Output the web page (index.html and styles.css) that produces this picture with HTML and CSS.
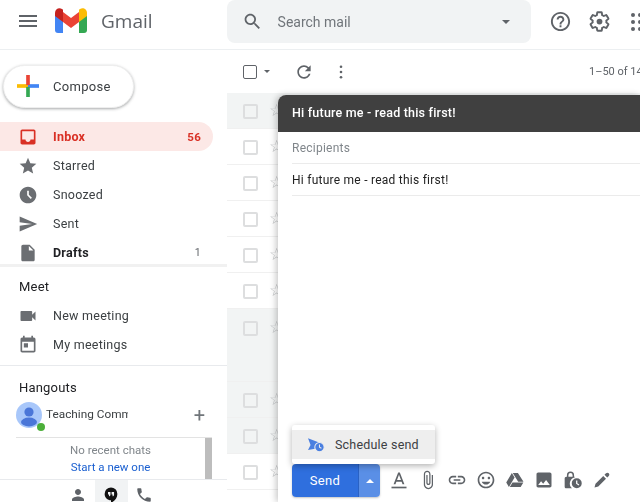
FILE: index.html
```html
<!DOCTYPE html>
<html lang="en">
<head>
    <meta charset="UTF-8">
    <title>Gmail</title>
    <meta name="viewport" content="width=device-width, initial-scale=1.0">
    <link rel="stylesheet" href="styles.css">
</head>
<body>
<div class="app">
    <header class="topbar">
        <svg class="menu-icon" viewBox="0 0 24 24"><path d="M3 18h18v-2H3v2zm0-5h18v-2H3v2zm0-7v2h18V6H3z"/></svg>
        <svg class="gmail-logo" viewBox="0 0 32 25">
            <path fill="#4285f4" d="M0 5h8v20H3a3 3 0 0 1-3-3z"/>
            <path fill="#34a853" d="M24 5h8v17a3 3 0 0 1-3 3h-5z"/>
            <path fill="#ea4335" d="M8 4l8 6 8-6v10l-8 6-8-6z"/>
            <path fill="#c5221f" d="M0 5C0 1 4-1 7 1l1 .8V14L0 8z"/>
            <path fill="#fbbc04" d="M32 5c0-4-4-6-7-4l-1 .8V14l8-6z"/>
        </svg>
        <span class="brand">Gmail</span>
        <div class="search">
            <svg class="search-icon" viewBox="0 0 24 24"><path d="M15.5 14h-.79l-.28-.27C15.41 12.59 16 11.11 16 9.5 16 5.91 13.09 3 9.5 3S3 5.91 3 9.5 5.91 16 9.5 16c1.61 0 3.09-.59 4.23-1.57l.27.28v.79l5 4.99L20.49 19l-4.99-5zm-6 0C7.01 14 5 11.99 5 9.5S7.01 5 9.5 5 14 7.01 14 9.5 11.99 14 9.5 14z"/></svg>
            <span class="search-text">Search mail</span>
            <span class="caret"></span>
        </div>
        <svg class="help-icon" viewBox="0 0 24 24"><path d="M11 18h2v-2h-2v2zm1-16C6.48 2 2 6.48 2 12s4.48 10 10 10 10-4.48 10-10S17.52 2 12 2zm0 18c-4.41 0-8-3.59-8-8s3.59-8 8-8 8 3.59 8 8-3.59 8-8 8zm0-14c-2.21 0-4 1.79-4 4h2c0-1.1.9-2 2-2s2 .9 2 2c0 2-3 1.75-3 5h2c0-2.25 3-2.5 3-5 0-2.21-1.79-4-4-4z"/></svg>
        <svg class="gear-icon" viewBox="0 0 24 24"><path fill="none" stroke="#5f6368" stroke-width="2" d="M19.14 12.94c.04-.3.06-.61.06-.94 0-.32-.02-.64-.07-.94l2.03-1.58c.18-.14.23-.41.12-.61l-1.92-3.32c-.12-.22-.37-.29-.59-.22l-2.39.96c-.5-.38-1.03-.7-1.62-.94l-.36-2.54c-.04-.24-.24-.41-.48-.41h-3.84c-.24 0-.43.17-.47.41l-.36 2.54c-.59.24-1.13.57-1.62.94l-2.39-.96c-.22-.08-.47 0-.59.22L2.74 8.87c-.12.21-.08.47.12.61l2.03 1.58c-.05.3-.09.63-.09.94s.02.64.07.94l-2.03 1.58c-.18.14-.23.41-.12.61l1.92 3.32c.12.22.37.29.59.22l2.39-.96c.5.38 1.03.7 1.62.94l.36 2.54c.05.24.24.41.48.41h3.84c.24 0 .44-.17.47-.41l.36-2.54c.59-.24 1.13-.56 1.62-.94l2.39.96c.22.08.47 0 .59-.22l1.92-3.32c.12-.22.07-.47-.12-.61l-2.01-1.58z"/><circle cx="12" cy="12" r="3"/></svg>
        <svg class="grid-icon" viewBox="0 0 18 18"><circle cx="2" cy="2" r="2"/><circle cx="9" cy="2" r="2"/><circle cx="2" cy="9" r="2"/><circle cx="9" cy="9" r="2"/><circle cx="2" cy="16" r="2"/><circle cx="9" cy="16" r="2"/></svg>
    </header>

    <div class="content">
        <aside class="sidebar">
            <button class="compose-btn">
                <svg class="plus-icon" viewBox="0 0 24 24">
                    <rect x="0" y="10" width="12" height="4" fill="#fbbc04"/>
                    <rect x="12" y="10" width="12" height="4" fill="#4285f4"/>
                    <rect x="10" y="0" width="4" height="11" fill="#ea4335"/>
                    <rect x="10" y="13" width="4" height="11" fill="#34a853"/>
                </svg>
                Compose
            </button>

            <nav class="nav nav-mail">
                <a class="nav-item active">
                    <svg viewBox="0 0 24 24"><path d="M19 3H5c-1.1 0-2 .9-2 2v14c0 1.1.9 2 2 2h14c1.1 0 2-.9 2-2V5c0-1.1-.9-2-2-2zm0 12h-4c0 1.66-1.35 3-3 3s-3-1.34-3-3H5V5h14v10z"/></svg>
                    <span class="nav-label">Inbox</span><span class="nav-count">56</span>
                </a>
                <a class="nav-item">
                    <svg viewBox="0 0 24 24"><path d="M12 17.27L18.18 21l-1.64-7.03L22 9.24l-7.19-.61L12 2 9.19 8.63 2 9.24l5.46 4.73L5.82 21z"/></svg>
                    <span class="nav-label">Starred</span>
                </a>
                <a class="nav-item">
                    <svg viewBox="0 0 24 24"><path d="M11.99 2C6.47 2 2 6.48 2 12s4.47 10 9.99 10C17.52 22 22 17.52 22 12S17.52 2 11.99 2zm3.3 14.71L11 12.41V7h2v4.59l3.71 3.71-1.42 1.41z"/></svg>
                    <span class="nav-label">Snoozed</span>
                </a>
                <a class="nav-item">
                    <svg viewBox="0 0 24 24"><path d="M2.01 21L23 12 2.01 3 2 10l15 2-15 2z"/></svg>
                    <span class="nav-label">Sent</span>
                </a>
                <a class="nav-item bold">
                    <svg viewBox="0 0 24 24"><path d="M6 2c-1.1 0-1.99.9-1.99 2L4 20c0 1.1.89 2 1.99 2H18c1.1 0 2-.9 2-2V8l-6-6H6zm7 7V3.5L18.5 9H13z"/></svg>
                    <span class="nav-label">Drafts</span><span class="nav-count small">1</span>
                </a>
            </nav>

            <section class="meet">
                <h3 class="side-title">Meet</h3>
                <a class="nav-item">
                    <svg viewBox="0 0 24 24"><path d="M17 10.5V7c0-.55-.45-1-1-1H4c-.55 0-1 .45-1 1v10c0 .55.45 1 1 1h12c.55 0 1-.45 1-1v-3.5l4 4v-11l-4 4z"/></svg>
                    <span class="nav-label">New meeting</span>
                </a>
                <a class="nav-item">
                    <svg viewBox="0 0 24 24"><path d="M19 3h-1V1h-2v2H8V1H6v2H5c-1.11 0-1.99.9-1.99 2L3 19c0 1.1.89 2 2 2h14c1.1 0 2-.9 2-2V5c0-1.1-.9-2-2-2zm0 16H5V8h14v11zM7 10h5v5H7z"/></svg>
                    <span class="nav-label">My meetings</span>
                </a>
            </section>

            <section class="hangouts">
                <h3 class="side-title">Hangouts</h3>
                <div class="hangout-user">
                    <div class="avatar">
                        <svg viewBox="0 0 26 26"><circle cx="13" cy="13" r="13" fill="#a8c7fa"/><circle cx="13" cy="10" r="4.6" fill="#4a76d8"/><ellipse cx="13" cy="20" rx="8" ry="4.4" fill="#4a76d8"/></svg>
                        <span class="online-dot"></span>
                    </div>
                    <span class="hangout-name">Teaching Comm</span>
                    <span class="hangout-plus">+</span>
                </div>
                <div class="chat-box">
                    <div class="chat-text">
                        <span class="chat-empty">No recent chats</span>
                        <a class="chat-link">Start a new one</a>
                    </div>
                    <div class="chat-scroll"></div>
                </div>
                <div class="chat-tabs">
                    <span class="chat-tab"><svg viewBox="0 0 24 24"><path d="M12 12c2.21 0 4-1.79 4-4s-1.79-4-4-4-4 1.79-4 4 1.79 4 4 4zm0 2c-2.67 0-8 1.34-8 4v2h16v-2c0-2.66-5.33-4-8-4z"/></svg></span>
                    <span class="chat-tab selected"><svg viewBox="0 0 24 24"><path fill="#111" fill-rule="evenodd" d="M12 2a8.500 8.500 0 0 0-8.500 8.500c0 4.700 3.800 8.500 8.500 8.500v3.500c4.500-2.200 8.500-6.700 8.500-12A8.500 8.500 0 0 0 12 2zM8 8h3.300v3.300c0 1.300-.8 2.200-2 2.500v-2.500H8zm4.800 0h3.300v3.300c0 1.300-.8 2.200-2 2.500v-2.500h-1.300z"/></svg></span>
                    <span class="chat-tab"><svg viewBox="0 0 24 24"><path d="M6.620 10.790c1.440 2.830 3.760 5.140 6.590 6.590l2.200-2.200c.27-.27.67-.36 1.020-.24 1.120.37 2.330.57 3.570.57.55 0 1 .45 1 1V20c0 .55-.45 1-1 1-9.390 0-17-7.610-17-17 0-.55.45-1 1-1h3.500c.55 0 1 .45 1 1 0 1.250.2 2.450.57 3.570.11.35.03.74-.25 1.020l-2.200 2.200z"/></svg></span>
                </div>
            </section>
        </aside>

        <main class="mail">
            <div class="mail-toolbar">
                <span class="check dark"></span>
                <span class="caret tiny"></span>
                <svg class="refresh-icon" viewBox="0 0 24 24"><path d="M17.650 6.350C16.200 4.900 14.210 4 12 4c-4.420 0-7.990 3.580-7.990 8s3.570 8 7.990 8c3.730 0 6.840-2.550 7.730-6h-2.080c-.82 2.330-3.040 4-5.650 4-3.310 0-6-2.690-6-6s2.690-6 6-6c1.660 0 3.140.69 4.220 1.780L13 11h7V4l-2.350 2.350z"/></svg>
                <svg class="more-icon" viewBox="0 0 4 16"><circle cx="2" cy="2" r="1.500"/><circle cx="2" cy="8" r="1.500"/><circle cx="2" cy="14" r="1.500"/></svg>
                <span class="paging">1–50 of 14</span>
            </div>
            <div class="row shaded"><span class="check"></span><span class="star">☆</span></div>
            <div class="row"><span class="check"></span><span class="star">☆</span></div>
            <div class="row"><span class="check"></span><span class="star">☆</span></div>
            <div class="row"><span class="check"></span><span class="star">☆</span></div>
            <div class="row"><span class="check"></span><span class="star">☆</span></div>
            <div class="row"><span class="check"></span><span class="star">☆</span></div>
            <div class="row shaded tall"><span class="check"></span><span class="star">☆</span></div>
            <div class="row shaded"><span class="check"></span><span class="star">☆</span></div>
            <div class="row shaded"><span class="check"></span><span class="star">☆</span></div>
            <div class="row"><span class="check"></span><span class="star">☆</span></div>
        </main>
    </div>

    <div class="compose-window">
        <div class="compose-head">Hi future me - read this first!</div>
        <div class="compose-field muted">Recipients</div>
        <div class="compose-field">Hi future me - read this first!</div>
        <div class="compose-body"></div>
        <div class="compose-foot">
            <div class="send-group">
                <span class="send-btn">Send</span>
                <span class="send-more"><span class="caret up"></span></span>
            </div>
            <div class="foot-icons">
                <svg viewBox="0 0 24 24"><path d="M11 3L5.500 17h2.250l1.120-3h6.250l1.120 3h2.250L13 3h-2zm-1.380 9L12 5.670 14.380 12H9.620z"/><rect x="3" y="20" width="18" height="2"/></svg>
                <svg viewBox="0 0 24 24"><path d="M16.500 6v11.500c0 2.210-1.790 4-4 4s-4-1.790-4-4V5c0-1.380 1.120-2.500 2.500-2.500s2.500 1.120 2.500 2.500v10.500c0 .55-.45 1-1 1s-1-.45-1-1V6H10v9.500c0 1.380 1.120 2.500 2.500 2.500s2.500-1.120 2.500-2.500V5c0-2.210-1.790-4-4-4S7 2.790 7 5v12.500c0 3.040 2.460 5.500 5.500 5.500s5.500-2.460 5.500-5.500V6h-1.500z"/></svg>
                <svg viewBox="0 0 24 24"><path d="M3.900 12c0-1.710 1.390-3.100 3.100-3.100h4V7H7c-2.760 0-5 2.240-5 5s2.240 5 5 5h4v-1.900H7c-1.710 0-3.100-1.390-3.100-3.100zM8 13h8v-2H8v2zm9-6h-4v1.900h4c1.710 0 3.100 1.390 3.100 3.100s-1.390 3.100-3.100 3.100h-4V17h4c2.760 0 5-2.240 5-5s-2.240-5-5-5z"/></svg>
                <svg viewBox="0 0 24 24"><path d="M11.990 2C6.470 2 2 6.480 2 12s4.470 10 9.990 10C17.520 22 22 17.520 22 12S17.520 2 11.990 2zM12 20c-4.420 0-8-3.580-8-8s3.580-8 8-8 8 3.580 8 8-3.580 8-8 8zm3.500-9c.83 0 1.500-.67 1.500-1.500S16.330 8 15.500 8 14 8.670 14 9.500s.67 1.500 1.500 1.500zm-7 0c.83 0 1.500-.67 1.500-1.500S9.330 8 8.500 8 7 8.670 7 9.500 7.670 11 8.500 11zm3.500 6.500c2.330 0 4.310-1.460 5.110-3.500H6.890c.8 2.040 2.780 3.500 5.110 3.500z"/></svg>
                <svg viewBox="0 0 24 24"><path d="M8.200 3.500L1.500 15l3.200 5.500L11.500 9zM9 15l-3.200 5.500h13l3.200-5.500zM22.200 14L15.500 3.500H9.300L15.800 14z"/></svg>
                <svg viewBox="0 0 24 24"><path d="M21 19V5c0-1.100-.9-2-2-2H5c-1.100 0-2 .9-2 2v14c0 1.100.9 2 2 2h14c1.100 0 2-.9 2-2zM8.500 13.500l2.500 3.010L14.500 12l4.500 6H5l3.500-4.500z"/></svg>
                <svg viewBox="0 0 24 24"><path d="M14 8h-.7V6.200a4.300 4.300 0 0 0-8.600 0V8H4c-1.100 0-2 .9-2 2v10c0 1.100.9 2 2 2h6.800A7.500 7.500 0 0 1 14 9zM6.500 8V6.200a2.500 2.500 0 0 1 5 0V8z"/><path fill-rule="evenodd" d="M16.500 10a6 6 0 1 0 0 12 6 6 0 0 0 0-12zm-.8 2.500h1.500v3.300l2.400 1.500-.8 1.200-3.100-1.900z"/></svg>
                <svg viewBox="0 0 24 24"><path d="M3 21l1.200-4.500L13.500 7.200l3.300 3.300L7.500 19.800zM15 5.700l1.800-1.800c1-1 2.400-1 3.300 0s1 2.300 0 3.300L18.300 9z"/></svg>
            </div>
        </div>
        <div class="schedule-menu">
            <div class="schedule-item">
                <svg viewBox="0 0 20 18"><path fill="#4a7fe0" d="M0 1l13 5-4 3 2 2-1 2-10 2 3-6z"/><circle cx="13.500" cy="11.500" r="5.500" fill="#4a7fe0" stroke="#eee" stroke-width="1.200"/><path fill="none" stroke="#eee" stroke-width="1.200" d="M13.500 8.500v3.200l2.300 1.200"/></svg>
                Schedule send
            </div>
        </div>
    </div>
</div>
</body>
</html>
```

FILE: styles.css
```css
html, body {
    margin: 0;
    height: 100%;
    overflow: hidden;
    background-color: #fff;
}

/* the whole shot is a little soft */
.app {
    position: relative;
    width: 640px;
    height: 502px;
    overflow: hidden;
    font-family: Roboto, "Liberation Sans", sans-serif;
    font-size: 12.5px;
    color: #3c4043;
    filter: blur(0.45px);
}

svg {
    fill: #5f6368;
    flex-shrink: 0;
}

/* Top bar */
.topbar {
    display: flex;
    align-items: flex-start;
    height: 49px;
    border-bottom: 1px solid #eceff1;
}

.menu-icon {
    width: 24px;
    height: 24px;
    margin: 9px 0 0 16px;
}

.gmail-logo {
    width: 32px;
    height: 25px;
    margin: 8px 0 0 15px;
}

.brand {
    width: 53px;
    margin: 8px 0 0 14px;
    font-family: "Open Sans", Roboto, sans-serif;
    font-size: 19px;
    line-height: 27px;
    color: #5f6368;
}

.search {
    display: flex;
    align-items: center;
    flex-shrink: 0;
    width: 304px;
    height: 43px;
    margin-left: 74px;
    background-color: #f1f3f4;
    border-radius: 8px;
}

.search-icon {
    width: 21px;
    height: 21px;
    margin-left: 15px;
}

.search-text {
    margin-left: 15px;
    font-size: 14px;
    color: #70757a;
}

.caret {
    width: 0;
    height: 0;
    border-left: 4.5px solid transparent;
    border-right: 4.5px solid transparent;
    border-top: 4.5px solid #5f6368;
}

.search .caret {
    margin-left: auto;
    margin-right: 21px;
}

.caret.tiny {
    margin-left: 7px;
    border-left-width: 3.5px;
    border-right-width: 3.5px;
    border-top-width: 3.5px;
}

.caret.up {
    border-top: none;
    border-bottom: 4px solid #fff;
    border-left-width: 4px;
    border-right-width: 4px;
}

.help-icon {
    width: 23px;
    height: 23px;
    margin: 10px 0 0 18px;
}

.gear-icon {
    width: 23px;
    height: 23px;
    margin: 10px 0 0 16px;
}

.grid-icon {
    width: 18px;
    height: 18px;
    margin: 13px 0 0 20px;
}

/* Main layout */
.content {
    display: flex;
    height: 452px;
}

.sidebar {
    width: 227px;
    flex-shrink: 0;
}

.compose-btn {
    display: flex;
    align-items: center;
    gap: 14px;
    width: 131px;
    height: 43px;
    margin: 15px 0 14px 3px;
    padding: 0 0 1px 13px;
    background-color: #fff;
    border: 1px solid #eee;
    border-radius: 22px;
    box-shadow: 0 1px 3px rgba(60, 64, 67, 0.45);
    font-family: Roboto, sans-serif;
    font-size: 13px;
    letter-spacing: 0.3px;
    color: #3c4043;
}

.plus-icon {
    width: 22px;
    height: 22px;
}

.nav-mail {
    height: 142px;
    overflow: hidden;
    border-bottom: 3px solid #f1f1f1;
}

.nav-item {
    display: flex;
    align-items: center;
    width: 213px;
    height: 29px;
    padding-left: 18px;
    box-sizing: border-box;
    color: #3c4043;
    letter-spacing: 0.25px;
}

.nav-item svg {
    width: 20px;
    height: 20px;
    fill: #6b6e72;
}

.nav-label {
    margin-left: 15px;
}

.nav-count {
    margin-left: auto;
    margin-right: 12px;
    font-size: 11.5px;
    font-weight: 700;
}

.nav-count.small {
    font-weight: 400;
    font-size: 10.5px;
    color: #5f6368;
}

.nav-item.active {
    background-color: #fce8e6;
    border-radius: 0 15px 15px 0;
    color: #d93025;
    font-weight: 700;
}

.nav-item.active svg {
    fill: #d93025;
}

.nav-item.bold {
    color: #202124;
    font-weight: 700;
}

.side-title {
    margin: 0;
    padding-left: 19px;
    font-size: 13px;
    font-weight: 400;
    letter-spacing: 0.2px;
    color: #202124;
}

.meet {
    height: 99px;
    padding-top: 11px;
    box-sizing: border-box;
    border-bottom: 1px solid #e8eaed;
}

.meet .side-title {
    line-height: 17px;
    margin-bottom: 6px;
}

.hangouts {
    padding-top: 13px;
}

.hangouts .side-title {
    line-height: 17px;
}

.hangout-user {
    display: flex;
    align-items: center;
    height: 27px;
    padding: 0 22px 0 16px;
    margin-top: 5px;
    margin-bottom: 9px;
}

.avatar {
    position: relative;
    width: 26px;
    height: 26px;
}

.avatar svg {
    width: 26px;
    height: 26px;
}

.online-dot {
    position: absolute;
    right: -3px;
    bottom: -3px;
    width: 8px;
    height: 8px;
    background-color: #4caf3a;
    border-radius: 50%;
}

.hangout-name {
    width: 82px;
    margin-left: 4px;
    margin-top: -1px;
    overflow: hidden;
    white-space: nowrap;
    font-size: 11.8px;
    color: #3c4043;
}

.hangout-plus {
    margin-left: auto;
    font-size: 20px;
    line-height: 20px;
    color: #70757a;
}

.chat-box {
    display: flex;
    width: 196px;
    height: 42px;
    margin-left: 16px;
    border-top: 1px solid #e3e3e3;
    box-sizing: border-box;
}

.chat-text {
    flex: 1;
    display: flex;
    flex-direction: column;
    align-items: center;
    padding-top: 4px;
    font-size: 11.5px;
    line-height: 17px;
}

.chat-empty {
    color: #80868b;
}

.chat-link {
    color: #1a5fd0;
}

.chat-scroll {
    width: 7px;
    background-color: #bdbdbd;
}

.chat-tabs {
    display: flex;
    justify-content: center;
    height: 24px;
    padding-right: 5px;
    border-top: 1px solid #e8eaed;
}

.chat-tab {
    display: flex;
    justify-content: center;
    padding-top: 6px;
    width: 33px;
}

.chat-tab svg {
    width: 18px;
    height: 18px;
}

.chat-tab.selected {
    background-color: #f1f3f4;
}

/* Mail list */
.mail {
    flex: 1;
    min-width: 0;
}

.mail-toolbar {
    display: flex;
    align-items: center;
    height: 43px;
    padding-left: 16px;
}

.check {
    width: 11px;
    height: 11px;
    border: 2px solid #dddedf;
    border-radius: 2px;
    flex-shrink: 0;
}

.check.dark {
    width: 12px;
    height: 12px;
    border-width: 1.5px;
    border-color: #5f6368;
}

.refresh-icon {
    width: 20px;
    height: 20px;
    margin-left: 24px;
}

.more-icon {
    width: 4px;
    height: 14px;
    margin-left: 25px;
}

.paging {
    margin-left: 246px;
    white-space: nowrap;
    font-size: 11px;
    color: #5f6368;
}

.row {
    display: flex;
    align-items: center;
    height: 36px;
    padding-left: 16px;
    padding-top: 1px;
    box-sizing: border-box;
    border-bottom: 1px solid #f0f0f0;
}

.row.shaded {
    background-color: #f2f4f4;
}

.row.tall {
    height: 73px;
    align-items: flex-start;
    padding-top: 12px;
}

.star {
    margin-left: 11px;
    margin-top: -2px;
    font-family: "DejaVu Sans", sans-serif;
    font-size: 17px;
    line-height: 17px;
    color: #c6c8ca;
}

/* Compose window, floats over the list */
.compose-window {
    position: absolute;
    left: 278px;
    top: 95px;
    right: 0;
    bottom: 0;
    display: flex;
    flex-direction: column;
    background-color: #fff;
    border-radius: 8px 0 0 0;
    box-shadow: -2px 0 6px rgba(0, 0, 0, 0.22);
}

.compose-head {
    height: 37px;
    padding-left: 14px;
    background-color: #404040;
    border-radius: 8px 0 0 0;
    font-size: 12.5px;
    font-weight: 500;
    line-height: 36px;
    letter-spacing: 0.2px;
    color: #fff;
}

.compose-field {
    height: 32px;
    margin-left: 14px;
    border-bottom: 1px solid #ebebeb;
    line-height: 33px;
    font-size: 12px;
    letter-spacing: 0.25px;
    color: #222;
    box-sizing: border-box;
}

.compose-field.muted {
    color: #80868b;
}

.compose-body {
    flex: 1;
}

.compose-foot {
    display: flex;
    align-items: center;
    height: 33px;
    padding-left: 14px;
    margin-bottom: 5px;
}

.send-group {
    display: flex;
    height: 33px;
    border-radius: 4px;
    overflow: hidden;
    box-shadow: 0 1px 2px rgba(60, 64, 67, 0.3);
}

.send-btn {
    width: 66px;
    background-color: #2f6fde;
    font-size: 13px;
    line-height: 33px;
    letter-spacing: 0.3px;
    text-align: center;
    color: #fff;
}

.send-more {
    display: flex;
    align-items: center;
    justify-content: center;
    width: 22px;
    background-color: #5a8fe6;
    border-left: 1px solid #2a62c4;
    box-sizing: border-box;
}

.foot-icons {
    display: flex;
    align-items: center;
    gap: 9px;
    margin-left: 9px;
    margin-top: -2px;
}

.foot-icons svg {
    width: 20px;
    height: 20px;
}

.schedule-menu {
    position: absolute;
    left: 14px;
    bottom: 38px;
    width: 143px;
    padding: 5px 0;
    background-color: #fff;
    border-radius: 3px;
    box-shadow: 0 2px 6px rgba(0, 0, 0, 0.3);
}

.schedule-item {
    display: flex;
    align-items: center;
    gap: 10px;
    height: 29px;
    padding-left: 16px;
    background-color: #eeeeee;
    font-size: 12.5px;
    letter-spacing: 0.2px;
    color: #3c4043;
}

.schedule-item svg {
    width: 17px;
    height: 16px;
}
```
